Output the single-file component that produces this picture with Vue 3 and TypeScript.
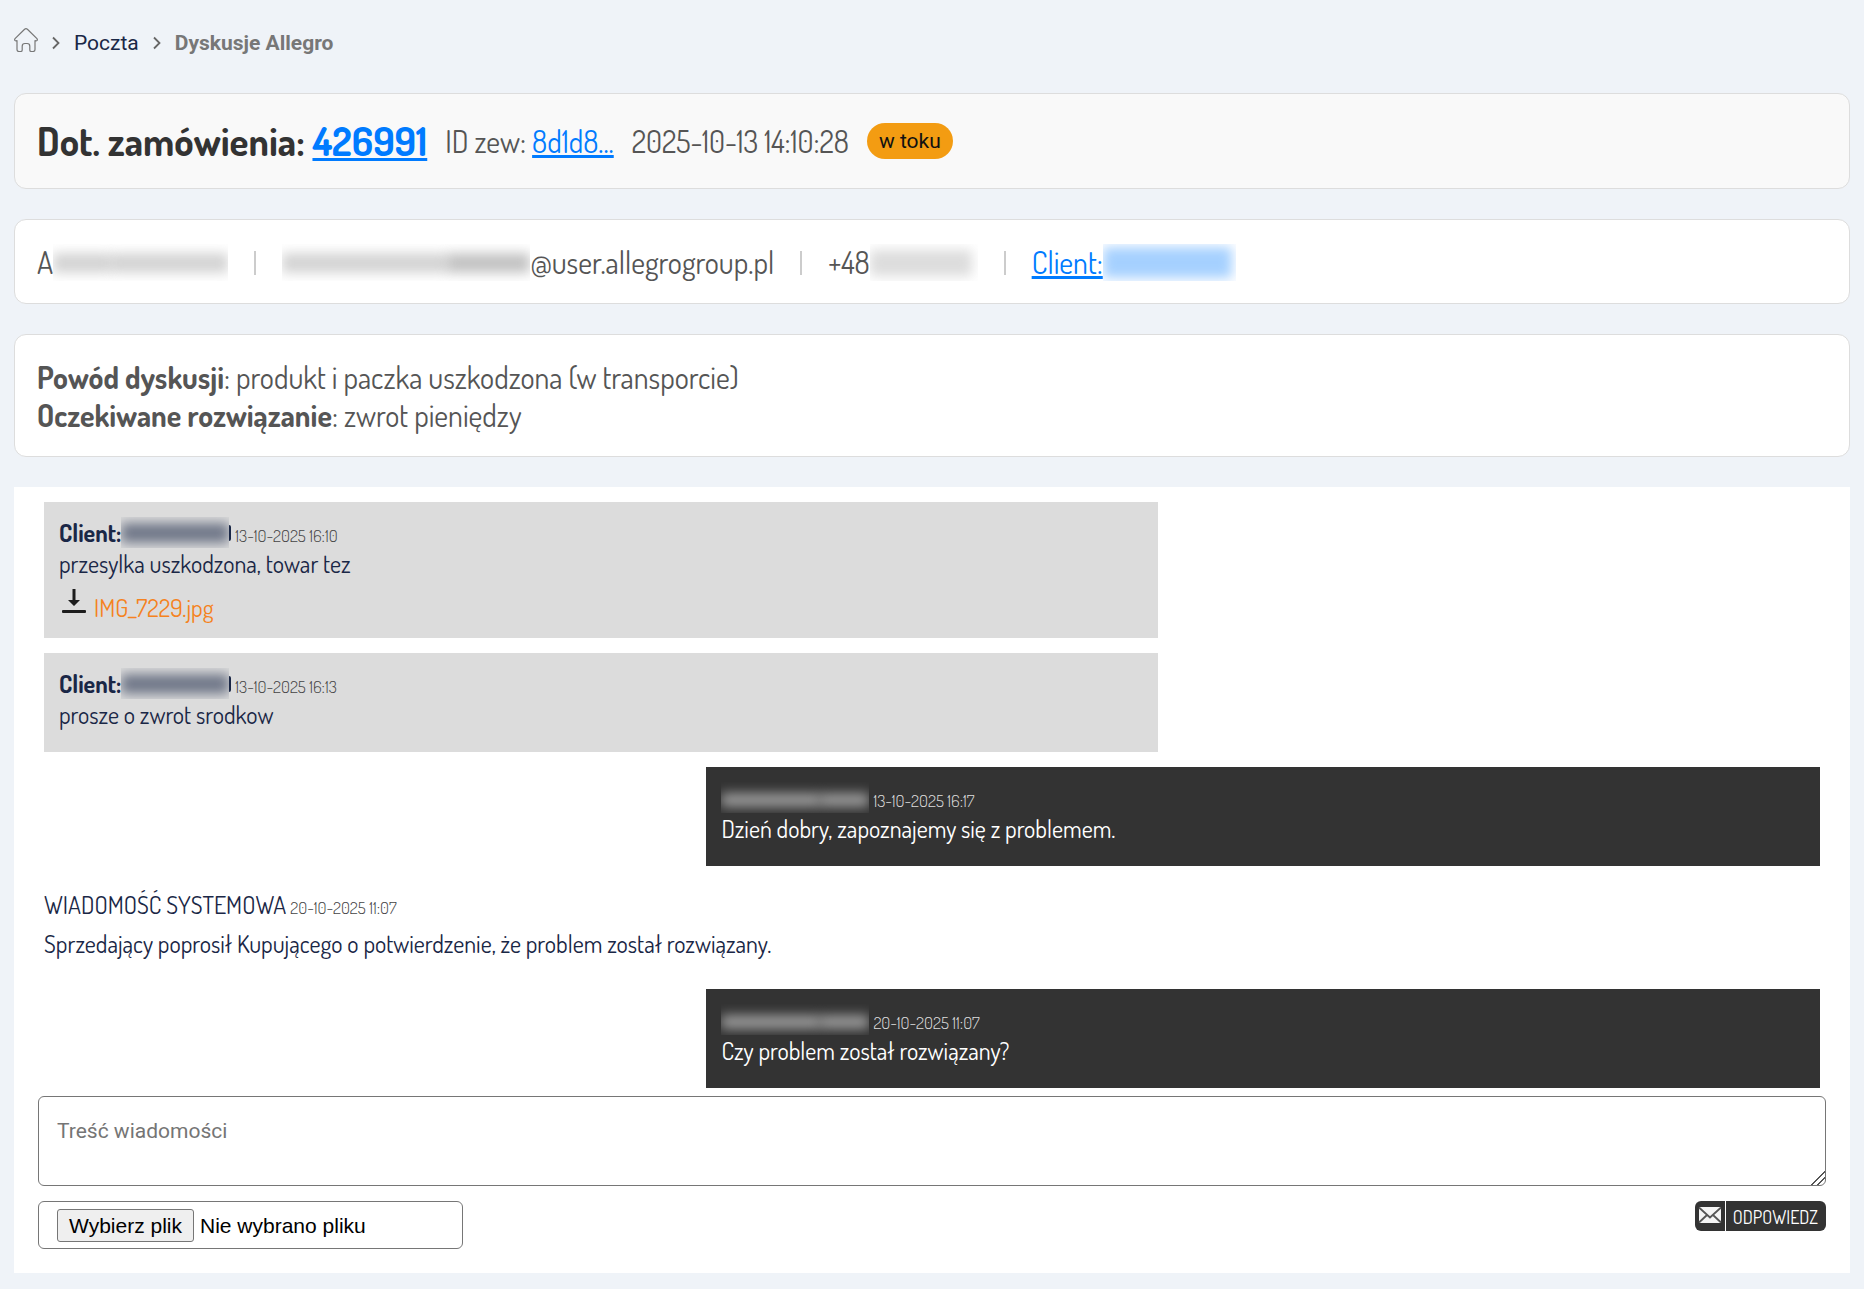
<script setup lang="ts">
import { ref } from 'vue'

interface Message {
  id: number
  side: 'client' | 'seller' | 'system'
  author: string
  date: string
  text: string
  attachment?: string
}

const messages: Message[] = [
  { id: 1, side: 'client', author: 'Client:', date: '13-10-2025 16:10', text: 'przesylka uszkodzona, towar tez', attachment: 'IMG_7229.jpg' },
  { id: 2, side: 'client', author: 'Client:', date: '13-10-2025 16:13', text: 'prosze o zwrot srodkow' },
  { id: 3, side: 'seller', author: '', date: '13-10-2025 16:17', text: 'Dzień dobry, zapoznajemy się z problemem.' },
  { id: 4, side: 'system', author: 'WIADOMOŚĆ SYSTEMOWA', date: '20-10-2025 11:07', text: 'Sprzedający poprosił Kupującego o potwierdzenie, że problem został rozwiązany.' },
  { id: 5, side: 'seller', author: '', date: '20-10-2025 11:07', text: 'Czy problem został rozwiązany?' },
]

const reply = ref('')
const fileName = ref('Nie wybrano pliku')

function onFile(event: Event) {
  const files = (event.target as HTMLInputElement).files
  fileName.value = files && files.length ? files[0].name : 'Nie wybrano pliku'
}
</script>

<template>
  <main class="page">
    <nav class="crumbs" aria-label="Okruszki">
      <a href="#" class="home" aria-label="Strona główna">
        <svg width="24" height="24" viewBox="0 0 24 24" fill="none" stroke="#777" stroke-width="1.2" stroke-linejoin="round">
          <path d="M1.3 10.4 10.6 1.2q1.4-1.1 2.8 0l9.3 9.2q1.1 1.1.4 2-.6.7-2.1.3v8.800q0 2-2 2h-1.600q-1.600 0-1.600-1.600v-3.700q0-2.700-2.700-2.700h-2.200q-2.700 0-2.700 2.700v3.700q0 1.600-1.600 1.600H5q-2 0-2-2v-8.800q-1.500.4-2.100-.3-.7-.9.4-2Z" />
        </svg>
      </a>
      <svg class="chevron" width="8" height="14" viewBox="0 0 8 14" fill="none" stroke="#666" stroke-width="1.800"><path d="M1 1.500 6.500 7 1 12.500" /></svg>
      <a href="#" class="crumb">Poczta</a>
      <svg class="chevron" width="8" height="14" viewBox="0 0 8 14" fill="none" stroke="#666" stroke-width="1.800"><path d="M1 1.500 6.500 7 1 12.500" /></svg>
      <span class="crumb current">Dyskusje Allegro</span>
    </nav>

    <header class="card summary">
      <h1>Dot. zamówienia: <a href="#">426991</a></h1>
      <span>ID zew: <a href="#">8d1d8...</a></span>
      <time>2025-10-13 14:10:28</time>
      <span class="badge">w toku</span>
    </header>

    <section class="card contact">
      <span class="masked">A<i class="veil veil-name"><b></b><b class="wide"></b></i></span>
      <span class="bar"></span>
      <span class="masked"><i class="veil veil-mail"><b class="wide"></b><b class="strong"></b></i>@user.allegrogroup.pl</span>
      <span class="bar"></span>
      <span class="masked">+48<i class="veil veil-phone"><b></b></i></span>
      <span class="bar"></span>
      <a href="#" class="masked">Client:<i class="veil veil-link"><b></b></i></a>
    </section>

    <section class="card reason">
      <p><strong>Powód dyskusji</strong>: produkt i paczka uszkodzona (w transporcie)</p>
      <p><strong>Oczekiwane rozwiązanie</strong>: zwrot pieniędzy</p>
    </section>

    <section class="panel">
      <div class="thread">
        <article v-for="m in messages" :key="m.id" class="message" :class="m.side">
          <div class="head">
            <span class="author">{{ m.author }}</span>
            <i v-if="m.side !== 'system'" class="veil" :class="`veil-${m.side}`"><b class="wide"></b><b v-if="m.side === 'seller'"></b></i>
            <i v-if="m.side === 'client'" class="edge"></i>
            <time>{{ m.date }}</time>
          </div>
          <p>{{ m.text }}</p>
          <a v-if="m.attachment" href="#" class="attachment">
            <svg width="32" height="30" viewBox="0 0 32 30" fill="#1d1d1d">
              <path d="M13.500 3h3v11h4.500L15 20 9 14h4.500Z" />
              <rect x="3" y="24" width="24" height="3" rx="1" />
            </svg>
            <span>{{ m.attachment }}</span>
          </a>
        </article>
      </div>

      <form class="reply" @submit.prevent>
        <textarea v-model="reply" aria-label="Treść wiadomości" placeholder="Treść wiadomości"></textarea>
        <div class="actions">
          <label class="file">
            <input type="file" @change="onFile" />
            <span class="pick">Wybierz plik</span>
            <span>{{ fileName }}</span>
          </label>
          <button type="submit" class="send">
            <span class="envelope">
              <svg width="24" height="18" viewBox="0 0 24 18">
                <rect x="1" y="1" width="22" height="16" rx="1" fill="#f4f4f4" />
                <path d="M1 1.500 12 11.500 23 1.500M1 16.500l8-7.500M23 16.500 15 9" fill="none" stroke="#555" stroke-width="1.800" />
              </svg>
            </span>
            <span class="send-text">ODPOWIEDZ</span>
          </button>
        </div>
      </form>
    </section>
  </main>
</template>

<style>
body {
  background: #eff3f8;
}
</style>

<style scoped>
* {
  box-sizing: border-box;
}

.page {
  padding: 14px 14px 16px;
  font-family: Dosis, "Open Sans", sans-serif;
  color: #555;
}

h1,
p {
  margin: 0;
}

.crumbs {
  display: flex;
  align-items: center;
  height: 58px;
  margin-bottom: 21px;
  font: 21px/24px Roboto, sans-serif;
}

.home {
  display: flex;
  margin-bottom: 6px;
}

.chevron {
  margin: 0 14px;
}

.crumb {
  color: #1a2746;
  text-decoration: none;
}

.current {
  color: #777;
  font-weight: 700;
}

.card {
  display: flex;
  margin-bottom: 30px;
  padding: 23px 22px;
  border: 1px solid #ddd;
  border-radius: 12px;
  background: #fff;
  font-size: 30px;
  line-height: 38px;
}

.card a {
  color: #007bff;
}

.summary {
  align-items: center;
  gap: 18px;
  background: #f9f9f9;
}

.summary h1 {
  color: #333;
  font-size: 39px;
  font-weight: 700;
  line-height: 48px;
}

.badge {
  padding: 0 12px;
  border-radius: 18px;
  background: #f39c12;
  color: #111;
  font: 21px/36px Roboto, sans-serif;
}

.contact {
  align-items: center;
  padding-block: 24px 22px;
  line-height: 37px;
}

.masked {
  display: flex;
  align-items: center;
}

.bar {
  width: 2px;
  height: 24px;
  margin: 0 26px;
  background: #ccc;
}

.veil {
  display: flex;
  align-items: center;
  flex: none;
  overflow: hidden;
  height: 37px;
}

.veil b {
  flex: 1;
  height: 20px;
  background: currentColor;
  filter: blur(6px);
  opacity: 0.25;
}

.veil .wide {
  flex: 2;
}

.veil .strong {
  opacity: 0.35;
}

.veil-name {
  width: 175px;
}

.veil-mail {
  width: 248px;
}

.veil-phone {
  width: 108px;
  padding-right: 6px;
}

.veil-phone b {
  height: 26px;
  opacity: 0.2;
}

.veil-link {
  width: 133px;
  padding-right: 4px;
}

.veil-link b {
  height: 31px;
  opacity: 0.35;
}

.reason {
  flex-direction: column;
  padding-bottom: 22px;
}

.panel {
  padding: 15px 24px 24px;
  background: #fff;
  color: #1a2746;
}

.thread {
  display: flex;
  flex-direction: column;
  gap: 15px;
  padding: 0 6px;
  font-size: 24px;
  line-height: 31px;
}

.message {
  width: calc(60% + 48px);
  min-height: 99px;
  padding: 15px;
}

.client {
  background: #dcdcdc;
}

.seller {
  align-self: flex-end;
  background: #333;
  color: #fff;
}

.system {
  width: auto;
  min-height: 0;
  padding: 4px 0 11px;
  line-height: 39px;
}

.head {
  display: flex;
  align-items: baseline;
}

.author {
  font-weight: 700;
}

.author::before {
  content: "\200b";
}

.system .author {
  font-weight: 400;
}

.head time {
  margin-left: 4px;
  color: #444;
  font-size: 17px;
  font-weight: 300;
  line-height: 20px;
}

.head .edge {
  align-self: center;
  width: 2px;
  height: 16px;
  border-radius: 0 2px 2px 0;
  background: currentColor;
}

.head.head .veil {
  align-self: center;
  height: 31px;
}

.seller time {
  color: #ddd;
}

.veil-client {
  width: 108px;
}

.veil-seller {
  width: 148px;
  padding-top: 4px;
}

.veil-client b {
  opacity: 0.55;
}

.veil-seller b {
  height: 14px;
  opacity: 0.5;
}

.attachment {
  display: flex;
  align-items: flex-end;
  height: 44px;
  gap: 3px;
  color: #f58220;
  text-decoration: none;
}

.attachment svg {
  align-self: center;
}

.reply {
  margin-top: 8px;
}

textarea {
  display: block;
  width: 100%;
  height: 90px;
  padding: 22px 18px;
  border: 1px solid #767676;
  border-radius: 6px;
  background: #fff;
  font: 21px/24px Roboto, sans-serif;
}

textarea::placeholder {
  color: #757575;
}

textarea::-webkit-resizer {
  background: linear-gradient(135deg, transparent 53%, #555 53% 60%, transparent 60% 73%, #555 73% 80%, transparent 80%);
}

.actions {
  display: flex;
  align-items: flex-start;
  justify-content: space-between;
  margin-top: 15px;
}

.file {
  display: flex;
  align-items: center;
  gap: 6px;
  width: 425px;
  height: 48px;
  padding: 0 18px;
  border: 1px solid #767676;
  border-radius: 6px;
  color: #000;
  font: 21px/31px "Liberation Sans", Arial, sans-serif;
}

.file input {
  position: absolute;
  width: 1px;
  height: 1px;
  opacity: 0;
}

.pick {
  padding: 0 11px;
  border: 1px solid #767676;
  border-radius: 3px;
  background: #efefef;
}

.send {
  display: flex;
  align-items: stretch;
  height: 30px;
  padding: 0;
  overflow: hidden;
  border: 0;
  border-radius: 6px;
  background: #333;
  color: #fff;
  font: 18px/32px Dosis, "Open Sans", sans-serif;
}

.envelope {
  padding: 5px 3px;
  border-right: 1px solid #fff;
  line-height: 0;
}

.send-text {
  padding: 0 8px 0 7px;
}
</style>
